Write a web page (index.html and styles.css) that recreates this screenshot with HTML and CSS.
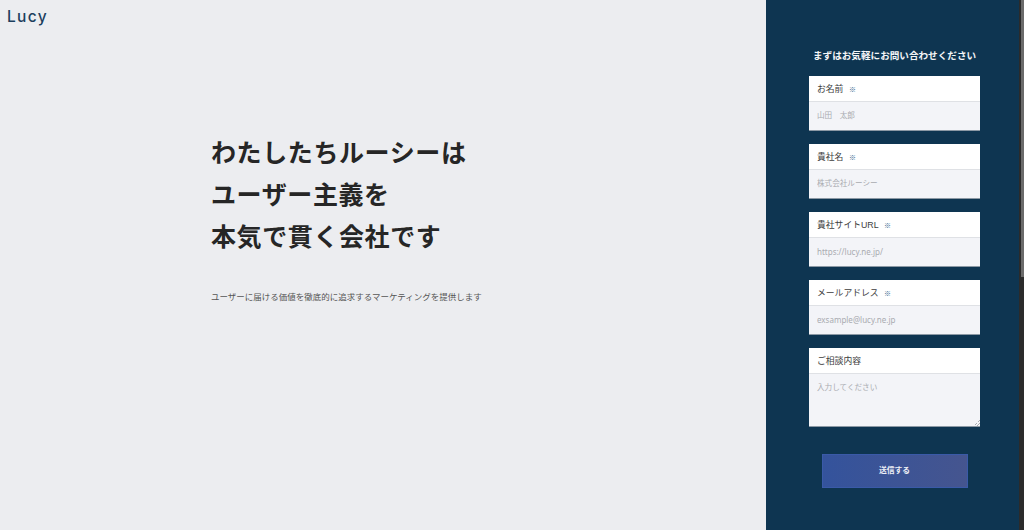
FILE: index.html
```html
<!DOCTYPE html>
<html lang="ja">
<head>
<meta charset="utf-8">
<title>Lucy</title>
<link rel="stylesheet" href="styles.css">
</head>
<body>
<div class="page">
  <main class="hero">
    <div class="logo">Lucy</div>
    <div class="copy">
      <h1>わたしたちルーシーは<br>ユーザー主義を<br>本気で貫く会社です</h1>
      <p>ユーザーに届ける価値を徹底的に追求するマーケティングを提供します</p>
    </div>
  </main>
  <aside class="panel">
    <h2>まずはお気軽にお問い合わせください</h2>
    <form class="form">
      <label class="field">
        <span class="label">お名前<i class="req">※</i></span>
        <input class="input" placeholder="山田　太郎">
      </label>
      <label class="field">
        <span class="label">貴社名<i class="req">※</i></span>
        <input class="input" placeholder="株式会社ルーシー">
      </label>
      <label class="field">
        <span class="label">貴社サイトURL<i class="req">※</i></span>
        <input class="input latin" placeholder="https://lucy.ne.jp/">
      </label>
      <label class="field">
        <span class="label">メールアドレス<i class="req">※</i></span>
        <input class="input latin" placeholder="exsample@lucy.ne.jp">
      </label>
      <label class="field">
        <span class="label">ご相談内容</span>
        <textarea class="input area" placeholder="入力してください"></textarea>
      </label>
      <button class="send" type="button">送信する</button>
    </form>
  </aside>
  <div class="scrollbar"><div class="thumb"></div></div>
</div>
</body>
</html>
```
FILE: styles.css
```css
* { box-sizing: border-box; }
html, body { margin: 0; height: 100%; overflow: hidden; }
body { font-family: "Noto Sans CJK JP", "Noto Sans", sans-serif; background: #ecedf0; }
.page { display: flex; height: 530px; }
.hero { flex: 0 0 766px; display: flex; flex-direction: column; background: #ecedf0; }
.logo { height: 130px; padding: 6px 0 0 7px; font-family: "Inter", sans-serif; font-size: 15.5px; line-height: 22px; font-weight: 500; letter-spacing: 1.3px; color: #1c3f5e; }
.copy { padding-left: 211px; }
h1 { margin: 0; font-size: 25px; line-height: 42px; font-weight: 700; letter-spacing: 0.6px; color: #262626; }
p { margin: 33px 0 0; font-size: 8.5px; line-height: 14px; color: #555; }
.panel { flex: 0 0 253px; display: flex; flex-direction: column; padding: 47px 0 0 43px; background: #0e3551; }
h2 { margin: 0 0 13px 4px; font-size: 9.6px; line-height: 16px; font-weight: 700; color: #f5f6f8; white-space: nowrap; }
.form { display: flex; flex-direction: column; gap: 13px; width: 171px; }
.field { display: flex; flex-direction: column; }
.label { display: flex; align-items: center; height: 26px; padding-left: 8px; background: #fff; border-bottom: 1px solid #dfe1e5; font-family: "Liberation Sans", "Noto Sans CJK JP", sans-serif; font-size: 8.8px; color: #3d3d3d; }
.req { margin-left: 5.5px; font-style: normal; font-weight: 700; font-size: 7px; color: #34648e; }
.input { display: block; width: 100%; height: 29px; margin: 0; padding: 0 8px 2px; border: 0; border-bottom: 1px solid #8c99a5; border-radius: 0; outline: 0; background: #f3f4f8; font-family: "Noto Sans", "Noto Sans CJK JP", sans-serif; font-size: 7.6px; color: #333; }
.latin { font-size: 8px; }
.input::placeholder { color: #a9abb0; opacity: 1; }
.area { height: 53px; padding-top: 7px; line-height: 12px; resize: none; background: linear-gradient(135deg, transparent 50%, #a9adb3 50%, #a9adb3 58%, transparent 58%, transparent 72%, #a9adb3 72%, #a9adb3 80%, transparent 80%) no-repeat right bottom / 6px 6px, #f3f4f8; }
.send { align-self: center; width: 146px; height: 34px; margin-top: 14px; padding: 0 0 3px; border: 1px solid #3a5aa8; border-radius: 0; background: linear-gradient(90deg, #34539c, #45558f); color: #eef0f6; font-family: inherit; font-size: 7.8px; font-weight: 700; }
.scrollbar { flex: 0 0 5px; padding-left: 2px; background: #2b2b2b; }
.thumb { height: 277px; background: #6b6b6b; }
```
